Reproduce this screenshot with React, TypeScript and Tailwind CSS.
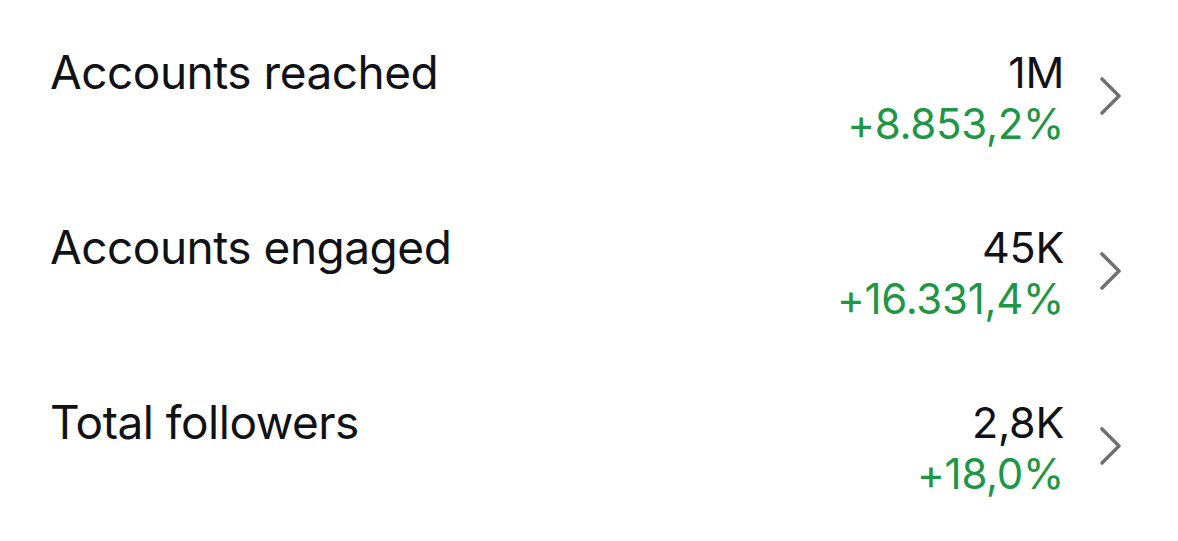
import React from 'react';

type Stat = { label: string; value: string; change: string };

const stats: Stat[] = [
  { label: 'Accounts reached', value: '1M', change: '+8.853,2%' },
  { label: 'Accounts engaged', value: '45K', change: '+16.331,4%' },
  { label: 'Total followers', value: '2,8K', change: '+18,0%' },
];

function Chevron() {
  return (
    <svg width="26" height="40" viewBox="0 0 26 40" fill="none" className="shrink-0">
      <path d="M4 3 L21 20 L4 37" stroke="#6e7178" strokeWidth="3.6" strokeLinecap="round" strokeLinejoin="round" />
    </svg>
  );
}

export default function App() {
  return (
    <div className="w-[1178px] h-[541px] bg-white overflow-hidden font-['Inter',sans-serif] antialiased">
      <div className="flex flex-col gap-[71px] pt-[46px] pl-[50px] pr-[54px]">
        {stats.map((s) => (
          <div key={s.label} className="flex items-start">
            <div className="flex-1 text-[46px] leading-[52px] tracking-[-0.5px] text-[#111216]">{s.label}</div>
            <div className="flex flex-col items-end">
              <div className="text-[43px] leading-[52px] tracking-[-0.3px] text-[#111216]">{s.value}</div>
              <div className="text-[42px] leading-[52px] tracking-[-0.3px] text-[#1e9645]">{s.change}</div>
            </div>
            <div className="ml-[34px] self-center -mt-[5px]">
              <Chevron />
            </div>
          </div>
        ))}
      </div>
    </div>
  );
}
